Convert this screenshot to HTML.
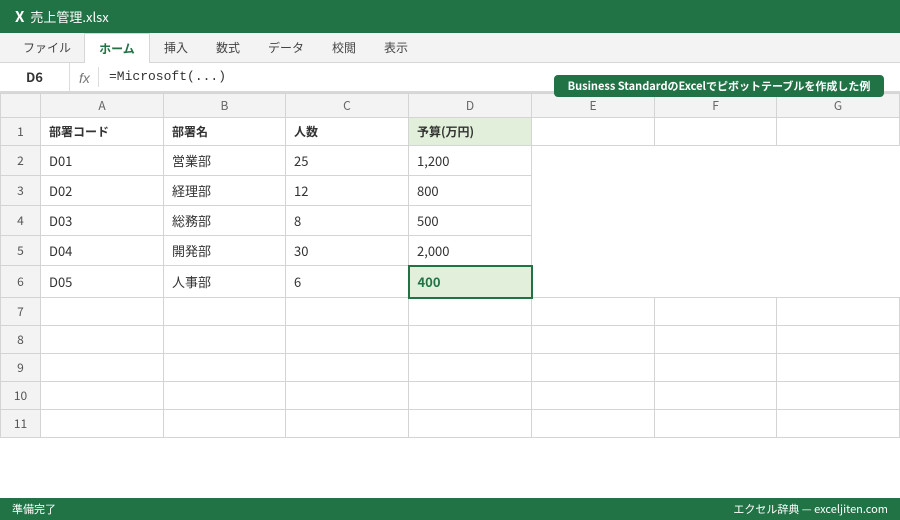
<!DOCTYPE html>
<html><head><meta charset="utf-8"><style>
*{margin:0;padding:0;box-sizing:border-box}
body{width:900px;height:520px;overflow:hidden;background:#fff;font-family:"Noto Sans CJK JP","Liberation Sans",sans-serif;color:#333;position:relative}
.title{position:absolute;left:0;top:0;width:900px;height:33px;background:#217346;color:#fff;font-size:13px;line-height:33px;padding-left:15px}
.title b{font-size:15px;margin-right:6px}
.tabs{position:absolute;left:0;top:33px;width:900px;height:30px;background:#f3f3f3;border-bottom:1px solid #d6d6d6;font-size:12px}
.tab{position:absolute;top:0;height:30px;line-height:30px;color:#444}
.tab.act{background:#fff;border:1px solid #d6d6d6;border-bottom:none;height:31px;color:#217346;font-weight:bold;text-align:center}
.fbar{position:absolute;left:0;top:63px;width:900px;height:30px;background:#fff;border-bottom:2px solid #d8d8d8}
.nb{position:absolute;left:0;top:0;width:70px;height:28px;line-height:28px;text-align:center;font-weight:bold;font-size:13px;border-right:1px solid #ddd}
.fx{position:absolute;left:79px;top:0;line-height:30px;font-style:italic;color:#777;font-size:14px;font-family:"Liberation Sans",sans-serif}
.sep{position:absolute;left:98px;top:4px;height:20px;border-left:1px solid #ddd}
.fm{position:absolute;left:109px;top:0;line-height:28px;font-family:"Liberation Mono",monospace;font-size:13px}
.tip{position:absolute;left:554px;top:75px;width:330px;height:22px;background:#217346;border-radius:4px;color:#fff;font-weight:bold;font-size:11px;line-height:22px;text-align:center;z-index:5}
table{position:absolute;left:0;top:93px;border-collapse:collapse;table-layout:fixed;font-size:13px}
td{border:1px solid #d4d4d4;padding:0 0 0 8px;white-space:nowrap}
tr.h td{background:#f3f3f3;text-align:center;padding:0;color:#666;font-size:12px;height:24px}
td.r{background:#f3f3f3;text-align:center;padding:0;color:#555;font-size:12px}
tr.b td{font-weight:bold;font-size:12px}
td.n{border:none}
.g{background:#e2efda}
.sel{background:#e2efda;border:2px solid #217346;color:#217346;font-weight:bold}
.status{position:absolute;left:0;top:498px;width:900px;height:22px;background:#217346;color:#fff;font-size:11px;line-height:22px;padding:0 12px}
.status span{float:right}
</style></head><body>
<div class="title"><b>X</b>売上管理.xlsx</div>
<div class="tabs">
<div class="tab" style="left:23px">ファイル</div>
<div class="tab act" style="left:84px;width:66px">ホーム</div>
<div class="tab" style="left:164px">挿入</div>
<div class="tab" style="left:216px">数式</div>
<div class="tab" style="left:268px">データ</div>
<div class="tab" style="left:332px">校閲</div>
<div class="tab" style="left:384px">表示</div>
</div>
<div class="fbar"><div class="nb">D6</div><div class="fx">fx</div><div class="sep"></div><div class="fm">=Microsoft(...)</div></div>
<div class="tip">Business StandardのExcelでピボットテーブルを作成した例</div>
<table>
<colgroup><col style="width:40px"><col style="width:123px"><col style="width:122px"><col style="width:123px"><col style="width:123px"><col style="width:123px"><col style="width:122px"><col style="width:123px"></colgroup>
<tr class="h"><td></td><td>A</td><td>B</td><td>C</td><td>D</td><td>E</td><td>F</td><td>G</td></tr>
<tr class="b" style="height:28px"><td class="r" style="font-weight:normal">1</td><td>部署コード</td><td>部署名</td><td>人数</td><td class="g">予算(万円)</td><td></td><td></td><td></td></tr>
<tr style="height:30px"><td class="r">2</td><td>D01</td><td>営業部</td><td>25</td><td>1,200</td><td class="n"></td><td class="n"></td><td class="n"></td></tr>
<tr style="height:30px"><td class="r">3</td><td>D02</td><td>経理部</td><td>12</td><td>800</td><td class="n"></td><td class="n"></td><td class="n"></td></tr>
<tr style="height:30px"><td class="r">4</td><td>D03</td><td>総務部</td><td>8</td><td>500</td><td class="n"></td><td class="n"></td><td class="n"></td></tr>
<tr style="height:30px"><td class="r">5</td><td>D04</td><td>開発部</td><td>30</td><td>2,000</td><td class="n"></td><td class="n"></td><td class="n"></td></tr>
<tr style="height:32px"><td class="r">6</td><td>D05</td><td>人事部</td><td>6</td><td class="sel">400</td><td class="n"></td><td class="n"></td><td class="n"></td></tr>
<tr style="height:28px"><td class="r">7</td><td></td><td></td><td></td><td></td><td></td><td></td><td></td></tr>
<tr style="height:28px"><td class="r">8</td><td></td><td></td><td></td><td></td><td></td><td></td><td></td></tr>
<tr style="height:28px"><td class="r">9</td><td></td><td></td><td></td><td></td><td></td><td></td><td></td></tr>
<tr style="height:28px"><td class="r">10</td><td></td><td></td><td></td><td></td><td></td><td></td><td></td></tr>
<tr style="height:28px"><td class="r">11</td><td></td><td></td><td></td><td></td><td></td><td></td><td></td></tr>
</table>
<div class="status">準備完了<span>エクセル辞典 — exceljiten.com</span></div>
</body></html>
